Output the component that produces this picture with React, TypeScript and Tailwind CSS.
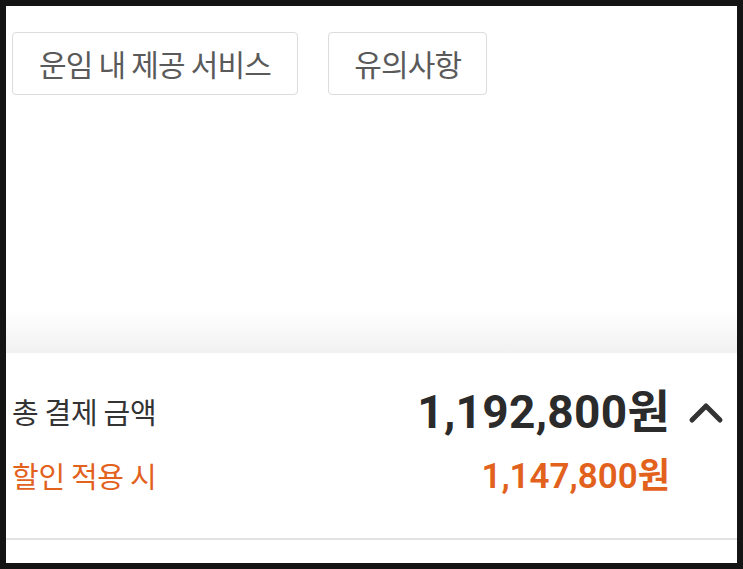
import React from "react";

const ChevronUp = () => (
  <svg width="36" height="24" viewBox="0 0 36 24" fill="none">
    <polyline
      points="4,20 18,6 32,20"
      stroke="#333333"
      strokeWidth="5"
      strokeLinecap="round"
      strokeLinejoin="round"
    />
  </svg>
);

const App = () => {
  return (
    <div className="w-[743px] h-[569px] bg-[#141414] p-[6px] font-['Noto_Sans_CJK_KR','Noto_Sans',sans-serif]">
      <div className="w-full h-full bg-white flex flex-col">
        {/* Tab buttons */}
        <div className="h-[304px] pt-[26px] pl-[6px] flex items-start gap-[30px]">
          <button className="h-[63px] px-[26px] border border-[#dcdcdc] rounded-[4px] text-[30px] text-[#5a5a5a] tracking-[-0.8px]">
            운임 내 제공 서비스
          </button>
          <button className="h-[63px] px-[25px] border border-[#dcdcdc] rounded-[4px] text-[30px] text-[#5a5a5a] tracking-[-0.8px]">
            유의사항
          </button>
        </div>

        {/* Shadow fade */}
        <div className="h-[43px] bg-gradient-to-b from-white to-[#f1f1f1]" />

        {/* Payment summary */}
        <div className="flex-1 flex flex-col pl-[6px] pr-[13px] pt-[33px]">
          <div className="flex items-center h-[52px]">
            <span className="flex-1 text-[29px] text-[#333333] tracking-[-0.3px]">
              총 결제 금액
            </span>
            <span className="font-['Roboto','Noto_Sans_CJK_KR',sans-serif] text-[46px] font-bold text-[#2b2b2b] tracking-[0.3px] leading-none">
              1,192,800원
            </span>
            <span className="ml-[18px] flex items-center">
              <ChevronUp />
            </span>
          </div>
          <div className="flex items-center h-[40px] mt-[18px]">
            <span className="flex-1 text-[29px] text-[#e2621d] tracking-[-0.3px]">
              할인 적용 시
            </span>
            <span className="font-['Roboto','Noto_Sans_CJK_KR',sans-serif] text-[35px] font-semibold text-[#e2621d] leading-none">
              1,147,800원
            </span>
            <span className="w-[54px]" />
          </div>
        </div>

        <div className="h-[2px] bg-[#e2e2e2]" />
        <div className="h-[23px]" />
      </div>
    </div>
  );
};

export default App;
